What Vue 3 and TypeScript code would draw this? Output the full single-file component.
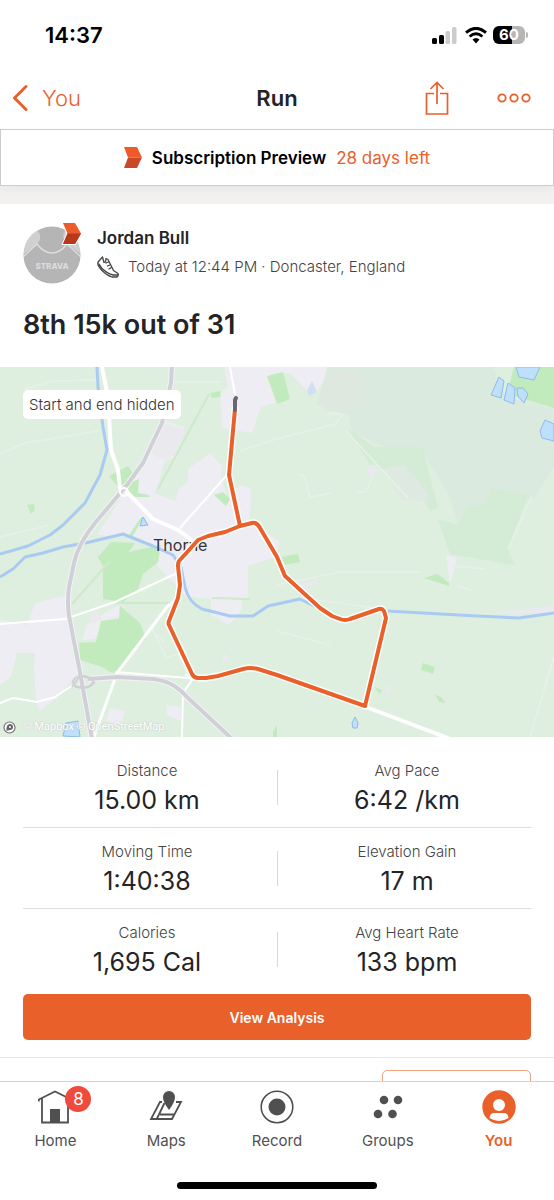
<script setup lang="ts">
interface Stat {
  label: string
  value: string
}

interface Tab {
  id: string
  label: string
  badge?: number
}

const statRows: Stat[][] = [
  [
    { label: 'Distance', value: '15.00 km' },
    { label: 'Avg Pace', value: '6:42 /km' },
  ],
  [
    { label: 'Moving Time', value: '1:40:38' },
    { label: 'Elevation Gain', value: '17 m' },
  ],
  [
    { label: 'Calories', value: '1,695 Cal' },
    { label: 'Avg Heart Rate', value: '133 bpm' },
  ],
]

const tabs: Tab[] = [
  { id: 'home', label: 'Home', badge: 8 },
  { id: 'maps', label: 'Maps' },
  { id: 'record', label: 'Record' },
  { id: 'groups', label: 'Groups' },
  { id: 'you', label: 'You' },
]

const activeTab = 'you'

const route =
  'M235 42L229 108L240 159L225 165L208 169L198 173L190 182L179 194Q178 196 178 199L180 218L178 231L169 254Q168 256 169 258L192 307Q194 311 198 311L206 311L218 309L243 302Q250 300 258 302L277 308L365 339L386 251L384 244Q382 241 379 242L350 252Q345 254 340 252L332 249L320 241L285 209L277 190L260 161Q257 155 252 156L240 159'

const motorway =
  'M172 -2L171 16L162 56L143 96L127 118L95 156Q78 177 74 196L69 220Q67 235 69 249L79 300L92 372'

const trunkRoad = 'M88 312L117 310L153 312Q173 314 187 330L231 371'
</script>

<template>
  <div class="screen">
    <div class="status">
      <span class="clock">14:37</span>
      <div class="indicators">
        <svg width="25" height="17" viewBox="0 0 25 17" aria-hidden="true">
          <rect x="0" y="11" width="5" height="6" rx="1.500" />
          <rect x="7" y="8" width="5" height="9" rx="1.500" />
          <rect x="13.500" y="4" width="4.500" height="13" rx="1.500" fill="#ccc" />
          <rect x="20" y="0" width="4.500" height="17" rx="1.500" fill="#ccc" />
        </svg>
        <svg width="22" height="17" viewBox="0 0 22 17" fill="none" stroke="#000" aria-hidden="true">
          <path d="M1 5.700Q11-3 21 5.700" stroke-width="3" />
          <path d="M4.600 9.500Q11 4 17.400 9.500" stroke-width="2.800" />
          <path d="M7.500 12.500Q11 9.500 14.500 12.500L11 16.500Z" fill="#000" stroke="none" />
        </svg>
        <div class="battery"><span>60</span></div>
      </div>
    </div>

    <header class="navbar">
      <a class="back" href="#you">
        <svg width="16" height="28" viewBox="0 0 16 28" fill="none" aria-hidden="true">
          <path d="M14 2.500L2.500 14L14 25.500" stroke="currentColor" stroke-width="3" stroke-linecap="round" stroke-linejoin="round" />
        </svg>
        You
      </a>
      <h1>Run</h1>
      <div class="actions">
        <button type="button" aria-label="Share">
          <svg width="24" height="34" viewBox="0 0 24 34" fill="none" stroke="currentColor" stroke-width="1.700" aria-hidden="true">
            <path d="M9 12.500H1.500V33H22.500V12.500H15M12 23V1.500M5.500 8L12 1.500L18.500 8" />
          </svg>
        </button>
        <button type="button" aria-label="More">
          <svg width="34" height="10" viewBox="0 0 34 10" fill="none" stroke="currentColor" stroke-width="1.800" aria-hidden="true">
            <circle cx="5" cy="5" r="3.700" /><circle cx="17" cy="5" r="3.700" /><circle cx="29" cy="5" r="3.700" />
          </svg>
        </button>
      </div>
    </header>

    <main>
      <a class="banner" href="#subscription">
        <svg width="18" height="21" viewBox="0 0 18 21" aria-hidden="true">
          <path d="M0 0H13L18 10.500H4Z" fill="#ee5b2b" />
          <path d="M4 10.500H18L13 21H0Z" fill="#c9482a" />
        </svg>
        <strong>Subscription Preview</strong>
        <span>28 days left</span>
      </a>
      <div class="separator"></div>

      <section class="activity">
        <div class="athlete">
          <div class="avatar">
            <svg width="58" height="58" viewBox="0 0 58 58" role="img" aria-label="Athlete">
              <defs><clipPath id="disc"><circle cx="29" cy="29" r="28.500" /></clipPath></defs>
              <g clip-path="url(#disc)">
                <rect width="58" height="58" fill="#b5b5b5" />
                <path d="M0 27Q4 8 14 4Q20 10 15 17L1 28Z" fill="#d0d0d0" />
                <path d="M42 5Q38 10 43 17L58 28V5Z" fill="#d0d0d0" />
                <path d="M0 31L14 18Q21 27 29 27Q37 27 44 18L58 31" fill="none" stroke="#dedede" stroke-width="1.300" />
              </g>
              <text x="29" y="43" text-anchor="middle">STRAVA</text>
            </svg>
            <svg class="chevron" width="20" height="23" viewBox="0 0 20 23" aria-hidden="true">
              <path d="M1 1H13L19 11.500L13 22H1L5.500 11.500Z" fill="#ee5b2b" stroke="#fff" stroke-width="2" paint-order="stroke" />
              <path d="M5.500 11.500H19L13 22H1Z" fill="#b9381b" />
            </svg>
          </div>
          <div class="who">
            <h2>Jordan Bull</h2>
            <p>
              <svg width="22" height="22" viewBox="0 0 22 22" fill="none" stroke="#444" stroke-width="1.300" stroke-linejoin="round" stroke-linecap="round" aria-hidden="true">
                <path d="M5.500 1L1.500 5.500Q.3 7 1.300 9.500L4.500 14Q10 19.500 15 21H20Q21.500 20 21 17.500L16.500 14.500L11 3.500L9 2.500L8.500 6L7 6.500Z" />
                <path d="M1.800 8L5 12.500Q11 18 16 19H21M11.500 6L9 7M13 9L10.500 10M14.500 11.500L12 13" />
              </svg>
              Today at 12:44 PM · Doncaster, England
            </p>
          </div>
        </div>
        <h3>8th 15k out of 31</h3>
      </section>

      <div class="map">
        <svg class="terrain" viewBox="0 0 554 370" role="img" aria-label="Route map around Thorne">
          <rect width="554" height="370" fill="#deeedf" />
          <path d="M327 0H493L505 28L554 42V100L535 130L468 155L458 157L448 125L425 90L385 80L352 65L349 48L317 38Z" fill="#dbeadf" />
          <path d="M325 5H365L361 35L330 45L320 38Z" fill="#dfe8df" />
          <path d="M348 62L375 80L422 80L438 140L430 144L405 98L385 102L372 101Z M438 152L458 158L466 141L486 136L491 121L528 128L508 182L515 198L450 187Z" fill="#d4ebd5" />
          <path d="M385 100L405 98L428 125L427 134L400 133Z" fill="#dee9e1" />

          <g fill="#eeedf3">
            <path d="M224 0H327L324 13L317 26L307 24L290 6L270 8L277 35L261 40L252 66L222 61L220 25L228 20Z" />
            <path d="M163 53L185 60L176 90L165 94L155 126L176 134L178 122L188 115V102L210 86L222 99L221 110L228 132L240 118L251 121L250 155L280 175L276 190L248 199V231L222 234L206 231L186 230L178 220L158 200L153 180L134 170L97 168L128 120L143 96Z" />
            <path d="M0 253L27 258L35 236L68 228L72 285L79 305L57 331L39 344L36 333L34 301L35 286H17L11 310L0 318Z" />
            <path d="M87 257L110 243L119 238V250L106 252L95 272L82 273Z M110 341L125 344L121 358L106 354Z M166 338L181 340V354L167 348Z M211 231L241 226L242 242L229 258L211 248Z M446 188L457 190L450 218Z" />
          </g>
          <g fill="#e9e9ee">
            <path d="M162 56L185 63L177 88L165 93L151 87ZM93 241L103 252L88 258ZM368 98H378L374 108H368ZM299 217L317 213L318 217L303 222ZM478 248L554 238V246H480ZM384 322L391 316L390 326ZM221 290L226 285L229 292L224 295Z" />
          </g>

          <g fill="#c2ebbd">
            <path d="M103 201L128 185L161 178L158 195L143 207L138 222L123 235L103 232Z" />
            <path d="M120 239L140 256L146 272L131 285L119 306L110 305L102 300L80 293L79 276L96 275L101 254L119 252Z" />
            <path d="M267 9L283 5L290 32L277 37Z M514 0H554V41L507 27Z" />
            <path d="M98 190L111 175L135 176L123 192L103 199Z M109 109L128 99L136 111L120 122ZM125 118L139 112L138 126L149 128V130L132 130Z M214 128L223 125L230 132L226 139ZM210 26L221 24L220 30L212 31Z" />
            <path d="M282 190L298 187L300 195L285 198ZM424 211L437 207L439 208L449 216V219ZM423 296L435 300L433 307L421 303ZM435 327L442 331L445 336L439 335ZM374 320L382 323L380 327ZM27 138L34 137L35 143L31 147ZM128 170L141 150L143 151L131 172ZM273 365L277 358V370H273Z" />
          </g>
          <path d="M158 122L209 27M72 237L110 194M117 236H171M212 231L250 232" fill="none" stroke="#cdeaca" stroke-width="2" />

          <g fill="#bfe0fa" stroke="#8cbbed">
            <path d="M516 0H540L534 13L519 10ZM499 10L504 14L501 31L491 28ZM508 16L515 21L514 37L504 33ZM517 21H523L528 27L524 36L518 29ZM554 57L545 53L540 64L542 71L554 74ZM143 150L148 158L140 159ZM63 369L66 356L78 354L80 370ZM355 350L358 356L357 361H353L352 356Z" />
            <path d="M307 24L312 14L317 25L309 29Z" fill="#cfe0f2" stroke="none" />
          </g>

          <g fill="none" stroke="#e8f1e9" stroke-width="1.500">
            <path d="M0 87L25 76L98 64M23 23L52 14L96 13M175 15H222M0 170L50 158M240 84L277 72L335 57L343 48L328 46M346 64L408 131M373 108L366 125H357M298 108L304 109L310 130L332 126M532 129L508 182M277 218L340 205L420 205M300 231L383 242M148 260L164 275M150 256L166 291L178 287L190 312M277 264L330 278M452 199L485 202M457 219L472 223M554 290L530 370" />
          </g>
          <g fill="none" stroke="#a9cbf2" stroke-width="3" stroke-linejoin="round">
            <path d="M97 0L98 20L103 60L107 83L100 108L85 136L63 158L50 168L28 179L0 187" />
            <path d="M0 210L13 202L25 190L43 186L63 180L90 175L123 167L153 179L173 188L181 200L185 220Q189 236 202 242L230 249H253L268 239L300 232L320 242L345 252M387 244L477 249L519 251L554 246" />
          </g>
          <g fill="none" stroke="#fff" stroke-width="3" stroke-linejoin="round" stroke-linecap="round">
            <path d="M102 0L108 30L111 83L118 103L120 121L128 126L153 152L178 163L193 174" stroke-width="4" />
            <path d="M180 161L226 109M230 0L235 27" stroke-width="2" />
            <path d="M0 257L65 252L115 235L177 206" stroke-width="2" />
            <path d="M94 370L117 306L167 240L173 235" />
            <path d="M0 336L13 331L37 335L55 330L73 318" stroke-width="2" />
            <path d="M182 370L183 326L192 313L186 308M116 305L188 311" stroke-width="2" />
            <path d="M366 340L448 371" stroke-width="4" />
          </g>
          <g fill="none" stroke-linejoin="round">
            <path :d="motorway" stroke="#f4f4f7" stroke-width="6" />
            <path :d="trunkRoad" stroke="#f4f4f7" stroke-width="6" />
            <path :d="motorway" stroke="#d0d0d7" stroke-width="4" />
            <path :d="trunkRoad" stroke="#d0d0d7" stroke-width="4" />
            <ellipse cx="83" cy="315" rx="10" ry="6" stroke="#d0d0d7" stroke-width="2" />
            <path d="M72 320L80 309L97 312M75 320H88L95 315" stroke="#d0d0d7" stroke-width="2" />
            <circle cx="124" cy="125" r="4" stroke="#fff" stroke-width="2" />
          </g>

          <text class="town" x="153" y="184">Thorne</text>
          <path :d="route" fill="none" stroke="#fff" stroke-width="7" stroke-linejoin="round" stroke-linecap="round" />
          <path :d="route" fill="none" stroke="#e9602a" stroke-width="4" stroke-linejoin="round" />
          <path d="M235 43V33L236 31" fill="none" stroke="#68686d" stroke-width="4" stroke-linecap="round" />
        </svg>
        <span class="privacy">Start and end hidden</span>
        <div class="credit">
          <svg width="13" height="13" viewBox="0 0 13 13" aria-hidden="true">
            <circle cx="6.500" cy="6.500" r="5.500" fill="#fff" stroke="#777" stroke-width="1.200" />
            <path d="M3.500 9.800Q3 3 7 3A2.800 2.800 0 0 1 7 9Q5 9.500 3.500 9.800Z" fill="#666" />
            <circle cx="7" cy="6" r="1" fill="#fff" />
          </svg>
          <span>© Mapbox © OpenStreetMap</span>
        </div>
      </div>

      <section class="stats">
        <div v-for="(row, i) in statRows" :key="i" class="row">
          <dl v-for="stat in row" :key="stat.label">
            <dt>{{ stat.label }}</dt>
            <dd>{{ stat.value }}</dd>
          </dl>
        </div>
      </section>

      <div class="analysis">
        <button type="button">View Analysis</button>
      </div>
      <div class="more">
        <button type="button" aria-label="More details"></button>
      </div>
    </main>

    <footer>
      <nav>
        <a v-for="tab in tabs" :key="tab.id" :href="`#${tab.id}`" :class="{ active: tab.id === activeTab }">
          <span class="icon">
            <svg v-if="tab.id === 'home'" width="34" height="34" viewBox="0 0 34 34" fill="none" stroke="currentColor" stroke-width="1.800" aria-hidden="true">
              <path d="M.8 11.500V9.500L17 1.500L33.200 9.500V11.500M4 8V32.500H30V8" />
              <path d="M12 19H22V33H12Z" fill="currentColor" stroke="none" />
            </svg>
            <svg v-else-if="tab.id === 'maps'" width="34" height="34" viewBox="0 0 34 34" fill="none" stroke="currentColor" stroke-width="1.800" aria-hidden="true">
              <path d="M13 12H11L2 29H23L32 12H27M15.500 13L8 28.500M11 24.500H25" />
              <path d="M20 20Q14 12 14 7A6 6 0 0 1 26 7Q26 12 20 20Z" fill="currentColor" stroke="none" />
            </svg>
            <svg v-else-if="tab.id === 'record'" width="34" height="34" viewBox="0 0 34 34" aria-hidden="true">
              <circle cx="17" cy="17" r="15.800" fill="none" stroke="currentColor" stroke-width="1.600" />
              <circle cx="17" cy="17" r="8.500" fill="currentColor" />
            </svg>
            <svg v-else-if="tab.id === 'groups'" width="34" height="34" viewBox="0 0 34 34" fill="currentColor" aria-hidden="true">
              <circle cx="13" cy="10" r="4.300" /><circle cx="27" cy="10" r="4.300" />
              <circle cx="7" cy="24" r="4.300" /><circle cx="21.500" cy="24" r="4.300" />
            </svg>
            <svg v-else width="34" height="34" viewBox="0 0 34 34" aria-hidden="true">
              <circle cx="17" cy="17" r="16.700" fill="currentColor" />
              <circle cx="17" cy="15" r="6" fill="#fff" />
              <path d="M7.500 28Q8 23 12 23H22Q26 23 26.500 28Q17 34 7.500 28Z" fill="#fff" />
            </svg>
            <b v-if="tab.badge">{{ tab.badge }}</b>
          </span>
          {{ tab.label }}
        </a>
      </nav>
      <div class="home-indicator"></div>
    </footer>
  </div>
</template>

<style>
body {
  margin: 0;
  background: #fff;
}
</style>

<style scoped>
* {
  box-sizing: border-box;
}

.screen {
  display: flex;
  flex-direction: column;
  height: 100vh;
  background: #fff;
  color: #242428;
  font-family: Inter, "Liberation Sans", sans-serif;
}

svg {
  display: block;
  flex: none;
}

h1,
h2,
h3,
p,
dl,
dd {
  margin: 0;
}

a {
  color: inherit;
  text-decoration: none;
}

button {
  padding: 0;
  border: 0;
  background: none;
  color: inherit;
  font: inherit;
}

.status {
  display: flex;
  flex: none;
  align-items: center;
  justify-content: space-between;
  height: 68px;
  padding: 2px 27px 0 45px;
  color: #000;
}

.clock {
  font-size: 22px;
  font-weight: 600;
}

.indicators {
  display: flex;
  align-items: center;
  gap: 8px;
}

.battery {
  position: relative;
  width: 32px;
  height: 18px;
  margin-left: -2px;
  margin-right: 2px;
  border-radius: 6px;
  background: linear-gradient(90deg, #000 60%, #b5b5b5 60%);
  color: #fff;
  font-size: 15px;
  font-weight: 700;
  line-height: 18px;
  text-align: center;
}

.battery::after {
  content: "";
  position: absolute;
  top: 6px;
  right: -3px;
  width: 2px;
  height: 6px;
  border-radius: 0 2px 2px 0;
  background: #b5b5b5;
}

.navbar {
  display: grid;
  flex: none;
  grid-template-columns: 1fr auto 1fr;
  align-items: center;
  height: 61px;
  padding: 0 23px 2px 12px;
}

.navbar h1 {
  padding-right: 1px;
  margin-left: 12px;
  font-size: 22px;
  font-weight: 600;
}

.back {
  display: flex;
  align-items: center;
  gap: 14px;
  color: #e9602a;
  font-size: 22px;
  font-weight: 300;
}

.actions {
  display: flex;
  align-items: center;
  justify-content: flex-end;
  gap: 48px;
  color: #e9602a;
}

main {
  flex: 1;
  min-height: 0;
  overflow-y: auto;
  scrollbar-width: none;
}

.banner {
  position: relative;
  display: flex;
  align-items: center;
  justify-content: center;
  gap: 10px;
  height: 57px;
  border: 1px solid #ccc;
  background: #fff;
  box-shadow: 0 4px 12px rgba(0, 0, 0, 0.04);
  font-size: 17px;
}

.banner strong {
  color: #000;
  font-weight: 600;
}

.banner span {
  color: #e9602a;
}

.separator {
  height: 18px;
  background: #f2f1f0;
}

.activity {
  position: relative;
  padding: 22px 23px 0;
  background: #fff;
}

.athlete {
  display: flex;
  align-items: center;
  gap: 16px;
}

.avatar {
  position: relative;
}

.avatar text {
  fill: #dcdcdc;
  font-size: 8px;
  font-weight: 800;
}

.chevron {
  position: absolute;
  top: -4px;
  right: -1px;
  overflow: visible;
}

.who {
  padding-bottom: 4px;
}

.who h2 {
  font-size: 17px;
  font-weight: 600;
  line-height: 24px;
}

.who p {
  display: flex;
  align-items: center;
  gap: 9px;
  margin-top: 4px;
  color: #444;
  font-size: 15px;
  font-weight: 300;
  line-height: 26px;
}

.activity h3 {
  padding: 23px 0 25px;
  font-size: 27px;
  font-weight: 600;
  line-height: 35px;
}

.map {
  position: relative;
}

.terrain {
  width: 100%;
  height: auto;
}

.town {
  fill: #333;
  font-size: 16px;
}

.privacy {
  position: absolute;
  top: 23px;
  left: 23px;
  padding: 0 6px;
  border-radius: 5px;
  background: #fff;
  color: #333;
  font-size: 15px;
  font-weight: 300;
  line-height: 29px;
}

.credit {
  position: absolute;
  bottom: 3px;
  left: 3px;
  display: flex;
  align-items: center;
  gap: 7px;
  color: #fff;
  font-family: Roboto, "Liberation Sans", sans-serif;
  font-size: 11px;
  line-height: 14px;
  text-shadow: 0 0 2px #bbb;
}

.stats {
  padding: 10px 23px 0;
}

.row {
  position: relative;
  display: grid;
  grid-template-columns: 1fr 1fr;
  gap: 12px;
  height: 81px;
  padding-top: 13px;
  border-bottom: 1px solid #dedede;
  text-align: center;
}

.row:last-child {
  border-bottom: 0;
}

.row::after {
  content: "";
  position: absolute;
  top: 23px;
  left: 50%;
  width: 1px;
  height: 35px;
  background: #d8d8d8;
}

dt {
  color: #444;
  font-size: 15px;
  font-weight: 300;
  line-height: 22px;
}

dd {
  font-size: 25px;
  line-height: 36px;
}

.analysis {
  padding: 4px 23px 17px;
  border-bottom: 1px solid #e6e6e6;
}

.analysis button {
  display: block;
  width: 100%;
  height: 46px;
  border-radius: 5px;
  background: #e9602a;
  color: #fff;
  font-size: 14px;
  font-weight: 600;
}

.more {
  display: flex;
  justify-content: flex-end;
  padding: 12px 23px;
}

.more button {
  width: 149px;
  height: 46px;
  border: 1px solid #f0a27f;
  border-radius: 5px;
}

footer {
  flex: none;
  padding-bottom: 11px;
  border-top: 1px solid #d2d2d2;
  background: #fff;
}

nav {
  display: grid;
  grid-template-columns: repeat(5, 1fr);
  height: 100px;
  padding-top: 8px;
  color: #505050;
  font-size: 15px;
  line-height: 20px;
}

nav a {
  display: flex;
  flex-direction: column;
  align-items: center;
  gap: 7px;
}

nav .active {
  color: #e9602a;
  font-weight: 600;
}

.icon {
  position: relative;
}

.icon b {
  position: absolute;
  top: -4px;
  left: 27px;
  width: 26px;
  height: 26px;
  border-radius: 50%;
  background: #ef4a3c;
  color: #fff;
  font-size: 17px;
  font-weight: 400;
  line-height: 26px;
  text-align: center;
}

.home-indicator {
  width: 36%;
  height: 7px;
  margin: 0 auto;
  border-radius: 4px;
  background: #000;
}
</style>
